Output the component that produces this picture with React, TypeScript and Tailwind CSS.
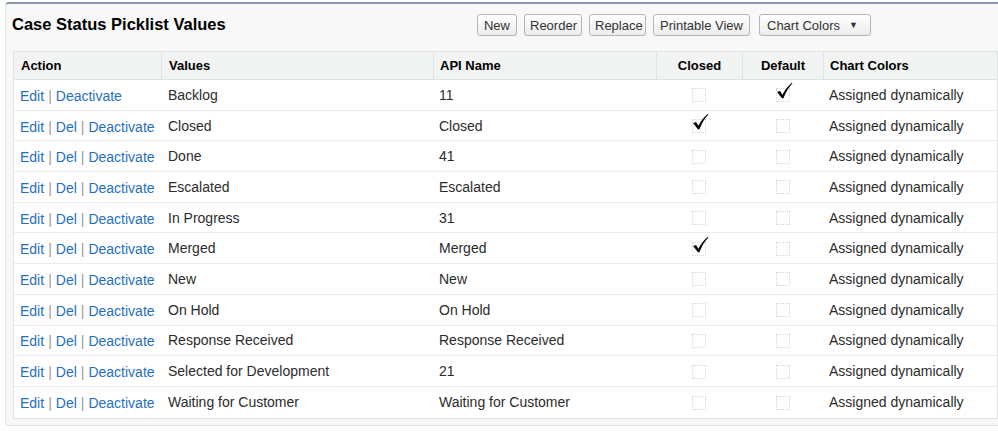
import React from 'react';

type Row = {
  value: string;
  api: string;
  closed?: boolean;
  isDefault?: boolean;
  noDel?: boolean;
};

const rows: Row[] = [
  { value: 'Backlog', api: '11', isDefault: true, noDel: true },
  { value: 'Closed', api: 'Closed', closed: true },
  { value: 'Done', api: '41' },
  { value: 'Escalated', api: 'Escalated' },
  { value: 'In Progress', api: '31' },
  { value: 'Merged', api: 'Merged', closed: true },
  { value: 'New', api: 'New' },
  { value: 'On Hold', api: 'On Hold' },
  { value: 'Response Received', api: 'Response Received' },
  { value: 'Selected for Development', api: '21' },
  { value: 'Waiting for Customer', api: 'Waiting for Customer' },
];

const Btn: React.FC<{ children: React.ReactNode; className?: string }> = ({ children, className = '' }) => (
  <button
    className={`h-[22px] px-[5px] rounded-[3px] border border-[#b5b5b5] bg-gradient-to-b from-white to-[#ececec] text-[13px] text-[#333] leading-none ${className}`}
  >
    {children}
  </button>
);

const Check: React.FC<{ checked?: boolean }> = ({ checked }) => (
  <span className="relative inline-block w-[14px] h-[14px] border border-dotted border-[#d6d6d6] align-middle">
    {checked && (
      <svg className="absolute -top-[7px] -left-[1px]" width="17" height="17" viewBox="0 0 16 16">
        <path d="M1 9.5 L3.8 8.4 L6 12 Q9.5 5 15 0.6 L15.4 1.3 Q10.6 6 7 15.2 L5.6 15.2 Z" fill="#000" />
      </svg>
    )}
  </span>
);

const Sep = () => <span className="text-[#999] px-[4px]">|</span>;

export default function App() {
  return (
    <div className="w-[998px] h-[431px] bg-white overflow-hidden pt-[2px] pl-[5px]" style={{ fontFamily: 'Arial, "Liberation Sans", sans-serif' }}>
      <div className="h-[424px] bg-[#f8f8f8] border-t-[2px] border-t-[#8a96aa] border-l border-b border-l-[#e3e3e3] border-b-[#e3e3e3] rounded-tl-[4px] rounded-bl-[4px]">
        <div className="flex items-center h-[41px]">
          <h2 className="pl-[6px] text-[16.5px] font-bold text-black w-[471px]">Case Status Picklist Values</h2>
          <div className="flex items-center gap-[7px] pt-[1px]">
            <Btn className="w-[40px]">New</Btn>
            <Btn className="w-[58px]">Reorder</Btn>
            <Btn className="w-[57px]">Replace</Btn>
            <Btn className="w-[97px]">Printable View</Btn>
            <Btn className="w-[112px] ml-[2px] flex items-center justify-start pl-[7px]">
              <span>Chart Colors</span>
              <span className="ml-[9px] text-[9px]">▼</span>
            </Btn>
          </div>
        </div>
        <div className="ml-[7px] mt-[6px] bg-white border border-[#e0e3e5] text-[14px] text-[#2b2b2b]">
          <div className="flex h-[28px] items-center bg-[#f2f3f3] font-bold text-[13px] text-black border-b border-[#e0e3e5] pt-[1px]">
            <div className="w-[147px] pl-[7px]">Action</div>
            <div className="w-[272px] pl-[7px] h-full flex items-center border-l border-[#e0e3e5]">Values</div>
            <div className="w-[223px] pl-[6px] h-full flex items-center border-l border-[#e0e3e5]">API Name</div>
            <div className="w-[86px] h-full flex items-center justify-center border-l border-[#e0e3e5]">Closed</div>
            <div className="w-[81px] h-full flex items-center justify-center border-l border-[#e0e3e5]">Default</div>
            <div className="flex-1 pl-[6px] h-full flex items-center border-l border-[#e0e3e5]">Chart Colors</div>
          </div>
          {rows.map((r, i) => (
            <div
              key={r.value}
              className={`flex h-[30.7px] items-center ${i < rows.length - 1 ? 'border-b border-[#ececec]' : ''}`}
            >
              <div className="w-[147px] pl-[6px] pt-[3px] text-[#1f6fbf] whitespace-nowrap">
                <span>Edit</span>
                <Sep />
                {!r.noDel && (
                  <>
                    <span>Del</span>
                    <Sep />
                  </>
                )}
                <span>Deactivate</span>
              </div>
              <div className="w-[272px] pl-[7px] pt-[1px]">{r.value}</div>
              <div className="w-[223px] pl-[6px] pt-[1px]">{r.api}</div>
              <div className="w-[86px] flex justify-center pt-[1px]">
                <Check checked={r.closed} />
              </div>
              <div className="w-[81px] flex justify-center pt-[1px]">
                <Check checked={r.isDefault} />
              </div>
              <div className="flex-1 pl-[6px] pt-[1px]">Assigned dynamically</div>
            </div>
          ))}
        </div>
      </div>
    </div>
  );
}
